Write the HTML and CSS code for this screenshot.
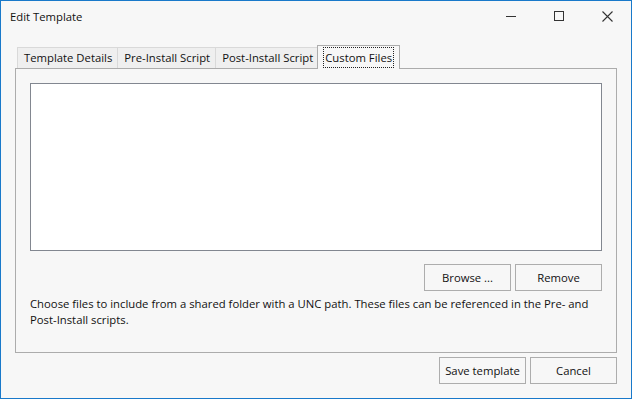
FILE: index.html
```html
<!DOCTYPE html>
<html lang="en">
<head>
<meta charset="utf-8">
<title>Edit Template</title>
<link rel="stylesheet" href="styles.css">
</head>
<body>
<div class="window">
  <div class="titlebar">
    <span class="title">Edit Template</span>
    <div class="controls">
      <span class="ctl"><svg width="11" height="11" viewBox="0 0 11 11"><path d="M0 5.5H10" stroke="#333" stroke-width="1" fill="none"/></svg></span>
      <span class="ctl"><svg width="11" height="11" viewBox="0 0 11 11"><rect x="0.5" y="0.5" width="9" height="9" stroke="#333" stroke-width="1" fill="none"/></svg></span>
      <span class="ctl"><svg width="11" height="11" viewBox="0 0 11 11"><path d="M0.5 0.5L10.5 10.5M10.5 0.5L0.5 10.5" stroke="#333" stroke-width="1.1" fill="none"/></svg></span>
    </div>
  </div>
  <div class="content">
    <div class="tabs">
      <div class="tab">Template Details</div>
      <div class="tab">Pre-Install Script</div>
      <div class="tab">Post-Install Script</div>
      <div class="tab active"><span class="focus">Custom Files</span></div>
    </div>
    <div class="panel">
      <div class="listbox"></div>
      <div class="btnrow">
        <button class="btn">Browse ...</button>
        <button class="btn">Remove</button>
      </div>
      <p class="hint">Choose files to include from a shared folder with a UNC path. These files can be referenced in the Pre- and Post-Install scripts.</p>
    </div>
    <div class="footer">
      <button class="btn">Save template</button>
      <button class="btn">Cancel</button>
    </div>
  </div>
</div>
</body>
</html>
```

FILE: styles.css
```css
* { box-sizing: border-box; }
html, body { margin: 0; padding: 0; }
body {
  font-family: "Open Sans", "Noto Sans", sans-serif;
  font-size: 11.3px;
  color: #111;
  background: #f7f7f7;
}
.window {
  width: 632px;
  height: 399px;
  border: 1px solid #1979ca;
  background: #f7f7f7;
  display: flex;
  flex-direction: column;
}
.titlebar {
  height: 30px;
  display: flex;
  align-items: center;
  justify-content: space-between;
  padding-left: 9px;
}
.title { color: #111; }
.controls { display: flex; height: 30px; }
.ctl {
  width: 48px;
  height: 30px;
  display: flex;
  align-items: center;
  justify-content: center;
}
.content {
  padding: 14px 14px 0 14px;
  display: flex;
  flex-direction: column;
}
.tabs {
  display: flex;
  align-items: flex-end;
  height: 23px;
  padding-left: 2px;
}
.tab {
  height: 21px;
  padding: 0 5px 0 6px;
  border: 1px solid #d9d9d9;
  border-bottom: none;
  background: #efefef;
  display: flex;
  align-items: center;
  line-height: 1;
  margin-right: -1px;
}
.tab.active {
  height: 24px;
  margin: 0 0 -1px -1px;
  padding: 0 6px;
  border-color: #acacac;
  background: #f7f7f7;
  position: relative;
  z-index: 1;
}
.focus {
  outline: 1px dotted #222;
  padding: 4px 1px 3px;
}
.panel {
  height: 285px;
  border: 1px solid #acacac;
  padding: 14px 14px 0 14px;
  display: flex;
  flex-direction: column;
}
.listbox {
  height: 168px;
  border: 1px solid #828790;
  background: #fff;
}
.btnrow {
  display: flex;
  justify-content: flex-end;
  gap: 4px;
  margin-top: 13px;
}
.btn {
  font: inherit;
  color: #111;
  width: 87px;
  height: 27px;
  border: 1px solid #adadad;
  background: #f7f7f7;
  padding: 0;
}
.hint {
  margin: 5px 0 0 0;
  line-height: 16px;
}
.footer {
  display: flex;
  justify-content: flex-end;
  gap: 4px;
  margin-top: 4px;
}
```
